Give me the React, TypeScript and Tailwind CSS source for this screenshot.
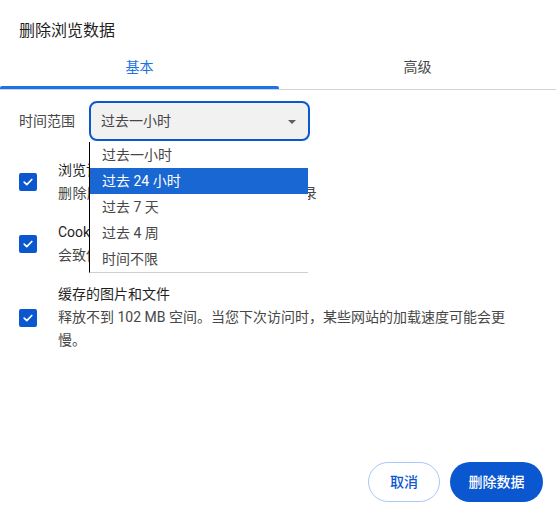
import React from "react";

const font = { fontFamily: 'Roboto, "Noto Sans CJK SC", sans-serif' };

function Check() {
  return (
    <div className="w-[18px] h-[18px] shrink-0 rounded-[2px] bg-[#0b57d0] flex items-center justify-center">
      <svg width="12" height="12" viewBox="0 0 12 12" fill="none">
        <path d="M2.2 6.2 L4.8 8.7 L9.8 3.5" stroke="white" strokeWidth="1.7" strokeLinecap="round" strokeLinejoin="round" />
      </svg>
    </div>
  );
}

function Row({ title, sub, width, subClass }: { title: string; sub: React.ReactNode; width?: string; subClass?: string }) {
  return (
    <div className="flex items-center gap-[21px] pl-[19px]">
      <Check />
      <div className={width ?? ""}>
        <div className="text-[14px] leading-[23px] text-[#1f1f1f]">{title}</div>
        <div className={"text-[14px] leading-[23px] text-[#474747] " + (subClass ?? "")}>{sub}</div>
      </div>
    </div>
  );
}

export default function App() {
  const items = ["过去一小时", "过去 24 小时", "过去 7 天", "过去 4 周", "时间不限"];
  return (
    <div className="w-[556px] h-[513px] bg-white flex flex-col overflow-hidden" style={font}>
      <div className="pt-[19px] pl-[19px] text-[16px] leading-[24px] text-[#1f1f1f]">删除浏览数据</div>
      <div className="flex h-[47px] border-b border-[#d3d3d3]">
        <div className="relative w-[279px] flex items-center justify-center pt-[2px] text-[14px] text-[#1a73e8]">
          基本
          <div className="absolute left-0 right-0 bottom-0 h-[3px] bg-[#1a73e8] rounded-t-[2px]" />
        </div>
        <div className="flex-1 flex items-center justify-center pt-[2px] text-[14px] text-[#474747]">高级</div>
      </div>

      <div className="relative z-10 mt-[11px] flex items-center pl-[19px]">
        <div className="w-[70px] text-[14px] text-[#474747]">时间范围</div>
        <div className="relative w-[221px] h-[40px] rounded-[8px] border-2 border-[#0b57d0] bg-[#f1f1f1] flex items-center pl-[10px] text-[14px] text-[#474747]">
          过去一小时
          <svg className="absolute right-[12px] top-[17px]" width="8" height="4" viewBox="0 0 8 4">
            <path d="M0 0 L8 0 L4 4 Z" fill="#5f5f5f" />
          </svg>
        </div>
        <div className="absolute left-[89px] top-[41px] w-[219px] bg-white border-l border-l-black border-b border-b-[#cfcfcf]">
          {items.map((t, i) => (
            <div
              key={t}
              className={
                "h-[26px] flex items-center pl-[12px] text-[14px] " +
                (i === 1 ? "bg-[#1967d2] text-white" : "text-[#474747]")
              }
            >
              {t}
            </div>
          ))}
        </div>
      </div>

      <div className="mt-[18px] flex flex-col gap-[16px]">
        <Row title="浏览记录" sub="删除历史记录，包括搜索框中的历史记录" subClass="tracking-[0.4px]" />
        <Row title="Cookie 及其他网站数据" sub="会致使您从大多数网站退出。" />
        <Row
          title="缓存的图片和文件"
          sub="释放不到 102 MB 空间。当您下次访问时，某些网站的加载速度可能会更慢。"
          width="w-[448px]"
        />
      </div>

      <div className="flex-1" />
      <div className="flex justify-end gap-[10px] pr-[13px] pb-[11px]">
        <button className="w-[72px] h-[40px] rounded-full border border-[#a8c7fa] bg-white text-[14px] font-medium text-[#0b57d0]">
          取消
        </button>
        <button className="w-[93px] h-[40px] rounded-full bg-[#0b57d0] text-[14px] font-medium text-white">
          删除数据
        </button>
      </div>
    </div>
  );
}
